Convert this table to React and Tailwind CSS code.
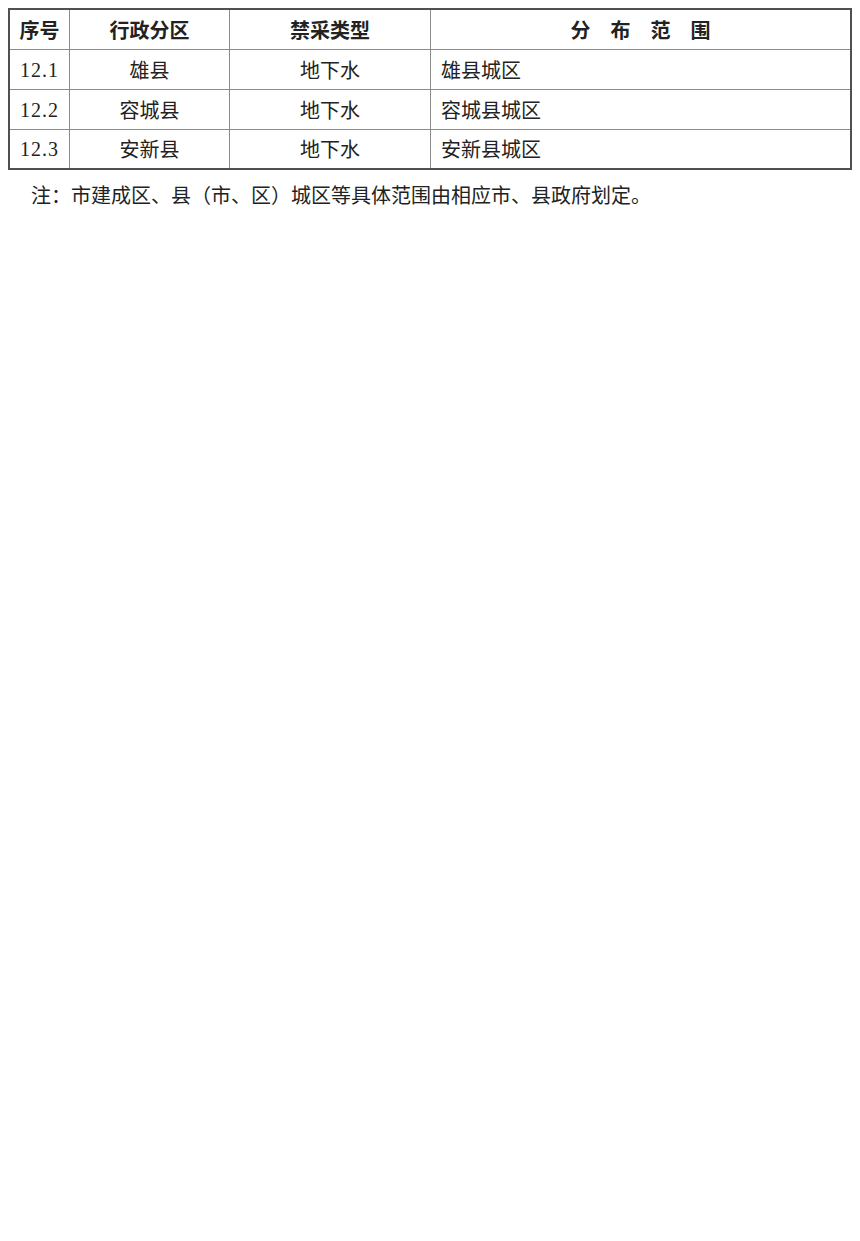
export default function App() {
  const rows = [
    ["12.1", "雄县", "地下水", "雄县城区"],
    ["12.2", "容城县", "地下水", "容城县城区"],
    ["12.3", "安新县", "地下水", "安新县城区"],
  ];
  const cjk = "font-['Noto_Sans_CJK_SC',sans-serif]";
  const serif = "font-['Liberation_Serif','Noto_Sans_CJK_SC',serif]";
  return (
    <div className="w-[860px] h-[1241px] bg-white pt-[8px] pl-[8px] text-[#222]">
      <div className="w-[844px] border-2 border-[#505050] grid grid-cols-[60px_160px_201px_1fr]">
        <div className={`h-[40px] border-r border-b border-[#8c8c8c] flex items-center justify-center font-bold text-[20px] ${cjk}`}>序号</div>
        <div className={`h-[40px] border-r border-b border-[#8c8c8c] flex items-center justify-center font-bold text-[20px] ${cjk}`}>行政分区</div>
        <div className={`h-[40px] border-r border-b border-[#8c8c8c] flex items-center justify-center font-bold text-[20px] ${cjk}`}>禁采类型</div>
        <div className={`h-[40px] border-b border-[#8c8c8c] flex items-center justify-center gap-[20px] font-bold text-[20px] ${cjk}`}>
          <span>分</span><span>布</span><span>范</span><span>围</span>
        </div>
        {rows.map((r, i) => {
          const last = i === rows.length - 1;
          const h = last ? "h-[38px]" : "h-[40px] border-b";
          return [
            <div key={i + "a"} className={`${h} border-r border-[#8c8c8c] flex items-center justify-center text-[20px] tracking-[1px] ${serif}`}>{r[0]}</div>,
            <div key={i + "b"} className={`${h} border-r border-[#8c8c8c] flex items-center justify-center text-[20px] ${cjk}`}>{r[1]}</div>,
            <div key={i + "c"} className={`${h} border-r border-[#8c8c8c] flex items-center justify-center text-[20px] ${cjk}`}>{r[2]}</div>,
            <div key={i + "d"} className={`${h} border-[#8c8c8c] flex items-center pl-[10px] text-[20px] ${cjk}`}>{r[3]}</div>,
          ];
        })}
      </div>
      <p className={`mt-[10px] pl-[23px] text-[20px] leading-[30px] ${cjk}`}>
        注：市建成区、县（市、区）城区等具体范围由相应市、县政府划定。
      </p>
    </div>
  );
}
